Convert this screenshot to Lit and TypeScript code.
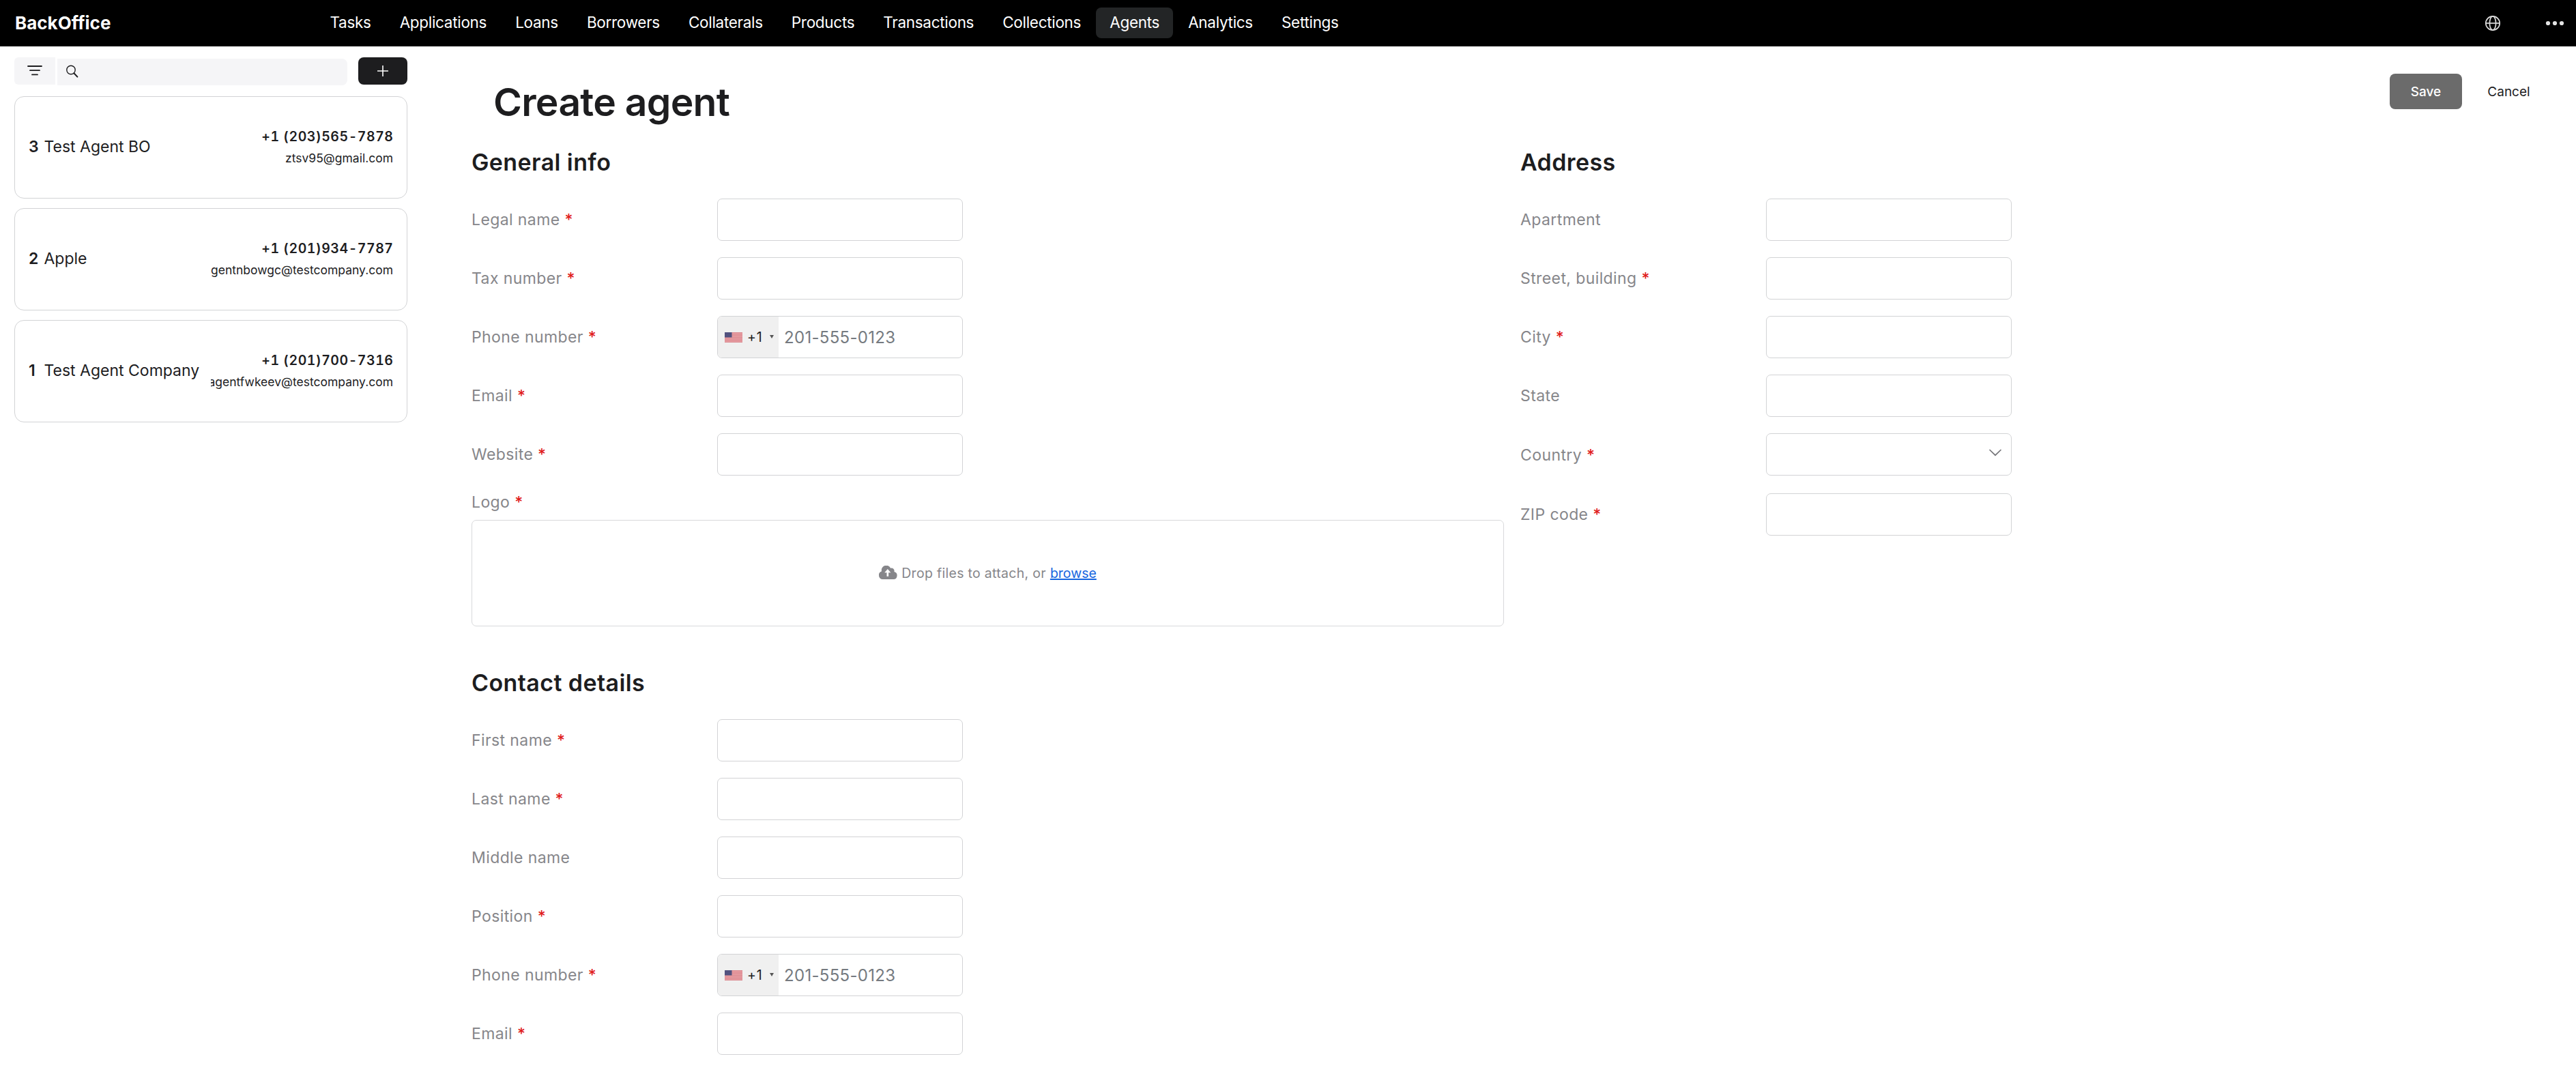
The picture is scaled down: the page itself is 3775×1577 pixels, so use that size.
import { css, html, svg, LitElement, nothing } from 'lit';
import { classMap } from 'lit/directives/class-map.js';
import { customElement, property } from 'lit/decorators.js';

interface Agent {
    id: number;
    name: string;
    phone: string;
    email: string;
}

interface Field {
    label: string;
    required?: boolean;
    type?: 'text' | 'phone' | 'select';
}

const MENU = [
    'Tasks', 'Applications', 'Loans', 'Borrowers', 'Collaterals', 'Products',
    'Transactions', 'Collections', 'Agents', 'Analytics', 'Settings'
];

const AGENTS: Agent[] = [
    { id: 3, name: 'Test Agent BO', phone: '+1 (203)565-7878', email: 'ztsv95@gmail.com' },
    { id: 2, name: 'Apple', phone: '+1 (201)934-7787', email: 'agentnbowgc@testcompany.com' },
    { id: 1, name: 'Test Agent Company', phone: '+1 (201)700-7316', email: 'agentfwkeev@testcompany.com' }
];

const GENERAL: Field[] = [
    { label: 'Legal name', required: true },
    { label: 'Tax number', required: true },
    { label: 'Phone number', required: true, type: 'phone' },
    { label: 'Email', required: true },
    { label: 'Website', required: true }
];

const CONTACT: Field[] = [
    { label: 'First name', required: true },
    { label: 'Last name', required: true },
    { label: 'Middle name' },
    { label: 'Position', required: true },
    { label: 'Phone number', required: true, type: 'phone' },
    { label: 'Email', required: true }
];

const ADDRESS: Field[] = [
    { label: 'Apartment' },
    { label: 'Street, building', required: true },
    { label: 'City', required: true },
    { label: 'State' },
    { label: 'Country', required: true, type: 'select' },
    { label: 'ZIP code', required: true }
];

@customElement('bo-header')
export class Header extends LitElement {
    static get styles() {
        //language=CSS
        return css`
            :host {
                display: flex;
                align-items: center;
                box-sizing: border-box;
                height: 68px;
                padding: 0 17px 1px 22px;
                background: #000;
                color: #fff;
            }

            .brand {
                width: 441.5px;
                font-size: 26px;
                font-weight: 700;
            }

            .menu {
                display: flex;
                flex: 1;
                gap: 2px;
            }

            .item {
                height: 45px;
                padding: 0 20px;
                border-radius: 8px;
                font-size: 22.5px;
                line-height: 44px;
                letter-spacing: -0.3px;
            }

            .item.active {
                background: #232526;
            }

            .tools {
                display: flex;
                align-items: center;
                gap: 65px;
            }
        `;
    }

    @property({ type: String })
    public active = 'Agents';

    protected render() {
        return html`
            <div class="brand">BackOffice</div>
            <nav class="menu">
                ${ MENU.map(item => html`<a class=${ classMap({ item: true, active: item === this.active }) }>${ item }</a>`) }
            </nav>
            <div class="tools">
                <svg width="24" height="24" viewBox="0 0 24 24" fill="none" stroke="#dcdcdc" stroke-width="1.7">
                    <circle cx="12" cy="12" r="10.2"/>
                    <ellipse cx="12" cy="12" rx="4.6" ry="10.2"/>
                    <path d="M1.8 12h20.4"/>
                </svg>
                <svg width="28" height="8" viewBox="0 0 28 8" fill="#e2e2e2">
                    <circle cx="4" cy="4" r="3.1"/>
                    <circle cx="14" cy="4" r="3.1"/>
                    <circle cx="24" cy="4" r="3.1"/>
                </svg>
            </div>`;
    }
}

@customElement('bo-agent-card')
export class AgentCard extends LitElement {
    static get styles() {
        //language=CSS
        return css`
            :host {
                display: flex;
                align-items: center;
                justify-content: space-between;
                box-sizing: border-box;
                height: 150px;
                padding: 0 20px;
                border: 1px solid #d2d3d5;
                border-radius: 14px;
                color: #1d1d1f;
            }

            .name {
                padding-bottom: 2px;
                font-size: 23px;
                white-space: nowrap;
            }

            .name b {
                display: inline-block;
                width: 22.5px;
                font-weight: 600;
            }

            .contacts {
                display: flex;
                flex-direction: column;
                align-items: flex-end;
                width: 267px;
                overflow: hidden;
                white-space: nowrap;
            }

            .phone {
                font-size: 19.5px;
                font-weight: 600;
                font-variant-numeric: tabular-nums;
                line-height: 32px;
                letter-spacing: 0.55px;
                margin-right: -0.5px;
            }

            .email {
                font-size: 17.5px;
                line-height: 32px;
            }
        `;
    }

    @property({ attribute: false })
    public agent!: Agent;

    protected render() {
        return html`
            <div class="name"><b>${ this.agent.id }</b>${ this.agent.name }</div>
            <div class="contacts">
                <div class="phone">${ this.agent.phone }</div>
                <div class="email">${ this.agent.email }</div>
            </div>`;
    }
}

@customElement('bo-sidebar')
export class Sidebar extends LitElement {
    static get styles() {
        //language=CSS
        return css`
            :host {
                display: flex;
                flex-direction: column;
                flex-shrink: 0;
                gap: 14px;
                box-sizing: border-box;
                width: 597px;
                padding: 16px 0 0 21px;
            }

            .toolbar {
                display: flex;
                height: 40px;
                margin-bottom: 3px;
            }

            .filter,
            .search,
            .add {
                display: flex;
                align-items: center;
                background: #f5f5f7;
            }

            .filter {
                justify-content: center;
                width: 60px;
                border-radius: 6px 0 0 6px;
            }

            .search {
                flex: 1;
                height: 39px;
                margin: 1.5px 16px 0 3px;
                padding-left: 12px;
                box-sizing: border-box;
                border-radius: 0 8px 8px 0;
            }

            .add {
                justify-content: center;
                width: 72px;
                border-radius: 8px;
                background: #1d1d1f;
            }
        `;
    }

    protected render() {
        return html`
            <div class="toolbar">
                <div class="filter">
                    <svg width="24" height="18" viewBox="0 0 24 18" stroke="#1d1d1f" stroke-width="1.8" stroke-linecap="round">
                        <path d="M2 2h20M5 8.2h14M8 14.4h8"/>
                    </svg>
                </div>
                <div class="search">
                    <svg width="20" height="20" viewBox="0 0 20 20" fill="none" stroke="#1d1d1f" stroke-linecap="round">
                        <circle cx="8" cy="7.5" r="6.2" stroke-width="1.4"/>
                        <path d="M12.4 12.2l5 5.4" stroke-width="2"/>
                    </svg>
                </div>
                <div class="add">
                    <svg width="18" height="18" viewBox="0 0 18 18" stroke="#fff" stroke-width="1.6">
                        <path d="M9 1v16M1 9h16"/>
                    </svg>
                </div>
            </div>
            ${ AGENTS.map(agent => html`<bo-agent-card .agent=${ agent }></bo-agent-card>`) }`;
    }
}

@customElement('bo-field')
export class FormField extends LitElement {
    static get styles() {
        //language=CSS
        return css`
            :host {
                display: flex;
                align-items: center;
            }

            .label {
                width: 360px;
                color: #86868a;
                font-size: 23px;
                letter-spacing: 0.4px;
            }

            .label i {
                color: #e01b1b;
                font-style: normal;
                font-weight: 500;
            }

            .control {
                display: flex;
                align-items: center;
                box-sizing: border-box;
                width: 360px;
                height: 62px;
                border: 1px solid #d2d3d5;
                border-radius: 7px;
                overflow: hidden;
            }

            .control.select {
                justify-content: flex-end;
                padding-right: 13px;
                margin-bottom: 2px;
            }

            .control.select svg {
                margin-bottom: 4px;
            }

            .prefix {
                display: flex;
                align-items: center;
                box-sizing: border-box;
                width: 89px;
                height: 100%;
                padding-left: 10px;
                background: #f0f0f0;
                color: #1d1d1f;
                font-size: 19.5px;
            }

            .code {
                width: 33px;
                margin-left: 7px;
                letter-spacing: 0.8px;
            }

            .placeholder {
                margin-left: 8px;
                color: #757a80;
                font-size: 24px;
                letter-spacing: 0.3px;
            }
        `;
    }

    @property({ attribute: false })
    public field!: Field;

    private renderFlag() {
        return html`
            <svg width="26" height="15" viewBox="0 0 26 15">
                <rect width="26" height="15" fill="#eda6ab"/>
                ${ [0, 1, 2, 3, 4, 5, 6].map(i => svg`<rect y=${ i * 2.3 } width="26" height="1.2" fill="#d9868d"/>`) }
                <rect width="10.5" height="7.5" fill="#52527f"/>
            </svg>`;
    }

    private renderControl() {
        switch (this.field.type) {
            case 'phone':
                return html`
                    <div class="control">
                        <div class="prefix">
                            ${ this.renderFlag() }
                            <span class="code">+1</span>
                            <svg width="6" height="7" viewBox="0 0 6 7" fill="#555"><path d="M0 0h6L3 5z"/></svg>
                        </div>
                        <div class="placeholder">201-555-0123</div>
                    </div>`;
            case 'select':
                return html`
                    <div class="control select">
                        <svg width="20" height="12" viewBox="0 0 20 12" fill="none" stroke="#77777b" stroke-width="1.7">
                            <path d="M1.5 1l8.5 8.2L18.5 1"/>
                        </svg>
                    </div>`;
            default:
                return html`<div class="control"></div>`;
        }
    }

    protected render() {
        return html`
            <div class="label">${ this.field.label }${ this.field.required ? html` <i>*</i>` : nothing }</div>
            ${ this.renderControl() }`;
    }
}

@customElement('app-root')
export class App extends LitElement {
    static get styles() {
        //language=CSS
        return css`
            :host {
                display: block;
                height: 1577px;
                overflow: hidden;
                background: #fff;
                color: #1d1d1f;
                font-family: Inter, 'Liberation Sans', sans-serif;
            }

            .body {
                display: flex;
            }

            .page {
                flex: 1;
                padding: 40px 30px 0 94px;
            }

            .top {
                display: flex;
                justify-content: space-between;
                height: 104px;
            }

            h1 {
                margin: 6px 0 0 32px;
                font-size: 57px;
                font-weight: 600;
                line-height: 71px;
                letter-spacing: -0.75px;
            }

            h2 {
                margin: 0;
                height: 79px;
                padding-top: 2px;
                box-sizing: border-box;
                font-size: 34px;
                font-weight: 600;
                line-height: 48px;
                letter-spacing: 0.4px;
            }

            .actions {
                display: flex;
                font-size: 19px;
                line-height: 53px;
                text-align: center;
            }

            .save {
                width: 106px;
                height: 52px;
                border-radius: 8px;
                background: #6b6b6b;
                color: #fff;
                font-weight: 500;
            }

            .cancel {
                width: 137px;
            }

            .columns {
                display: flex;
                gap: 24px;
            }

            .column {
                width: 1513px;
                flex-shrink: 0;
            }

            .column.address {
                flex-shrink: 1;
            }

            .fields {
                display: flex;
                flex-direction: column;
                gap: 24px;
            }

            .logo {
                height: 65px;
                box-sizing: border-box;
                padding-top: 22px;
                color: #86868a;
                font-size: 23px;
                line-height: 34px;
                letter-spacing: 0.4px;
            }

            .logo i {
                color: #e01b1b;
                font-style: normal;
                font-weight: 500;
            }

            .drop {
                display: flex;
                align-items: center;
                justify-content: center;
                box-sizing: border-box;
                height: 156px;
                margin-bottom: 57px;
                border: 1px solid #d8d9db;
                border-radius: 7px;
                color: #86868a;
                font-size: 19.5px;
                letter-spacing: 0.3px;
            }

            .drop svg {
                margin: 0 6px 2px 0;
            }

            .drop a {
                margin-left: 6px;
                color: #1766e0;
                letter-spacing: 0;
                text-decoration: underline;
                text-decoration-thickness: 2px;
                text-decoration-skip-ink: none;
                text-underline-offset: 1px;
            }
        `;
    }

    private renderFields(title: string, fields: Field[]) {
        return html`
            <h2>${ title }</h2>
            <div class="fields">
                ${ fields.map(field => html`<bo-field .field=${ field }></bo-field>`) }
            </div>`;
    }

    protected render() {
        return html`
            <bo-header></bo-header>
            <div class="body">
                <bo-sidebar></bo-sidebar>
                <main class="page">
                    <div class="top">
                        <h1>Create agent</h1>
                        <div class="actions">
                            <div class="save">Save</div>
                            <div class="cancel">Cancel</div>
                        </div>
                    </div>
                    <div class="columns">
                        <div class="column">
                            ${ this.renderFields('General info', GENERAL) }
                            <div class="logo">Logo <i>*</i></div>
                            <div class="drop">
                                <svg width="27" height="20" viewBox="0 0 27 20">
                                    <path fill="#86868a" d="M6 20A6 6 0 0 1 4 8.300 7 7 0 0 1 17.200 3.800a4.200 4.200 0 0 1 5.200 5.200A5.600 5.600 0 0 1 21.500 20z"/>
                                    <path fill="#fff" d="M12.800 5l4.600 5.200h-3.300v5.600h-2.600v-5.600H8.200z"/>
                                </svg>
                                <span>Drop files to attach, or</span><a>browse</a>
                            </div>
                            ${ this.renderFields('Contact details', CONTACT) }
                        </div>
                        <div class="column address">
                            ${ this.renderFields('Address', ADDRESS) }
                        </div>
                    </div>
                </main>
            </div>`;
    }
}
